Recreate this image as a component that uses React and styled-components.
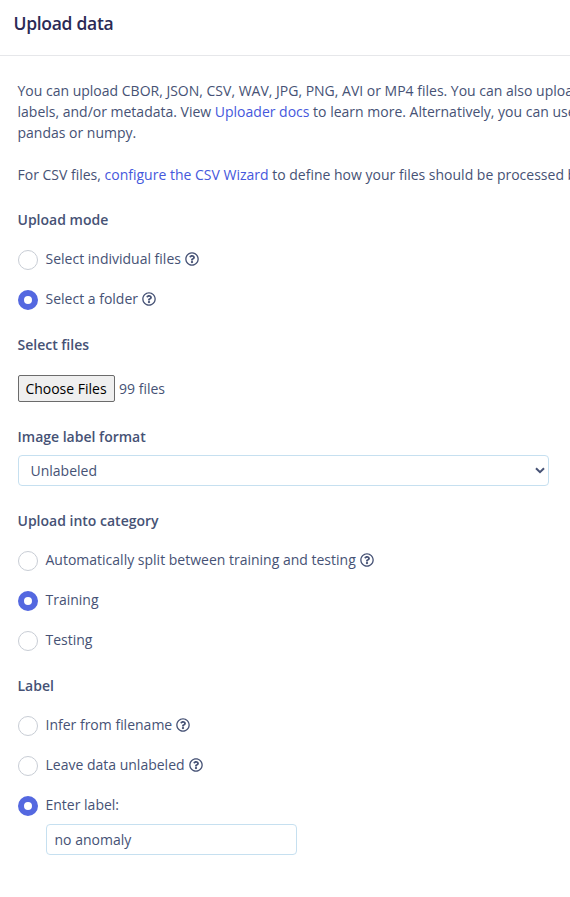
import React from "react";
import styled, { createGlobalStyle } from "styled-components";
import { FaRegQuestionCircle } from "react-icons/fa";

const GlobalStyle = createGlobalStyle`
  *, *::before, *::after { box-sizing: border-box; }
  body {
    margin: 0;
    background: #fff;
    color: #465275;
    font: 400 14px/21px "Open Sans", sans-serif;
    overflow: hidden;
  }
`;

const Dialog = styled.main`
  width: 100%;
  height: 897px;
  overflow: hidden;
`;

const Header = styled.header`
  height: 56px;
  padding: 11px 13.5px 0;
  border-bottom: 1px solid #e6e7ea;
`;

const Title = styled.h1`
  margin: 0;
  color: #2b2a55;
  font-size: 17.5px;
  font-weight: 600;
  line-height: 25px;
  letter-spacing: -0.3px;
`;

const Content = styled.div`
  padding: 24px 21px 0 17.5px;
`;

const Paragraph = styled.p`
  margin: 0 0 21px;
  white-space: nowrap;
`;

const Link = styled.a`
  color: #4558dc;
  text-decoration: none;
`;

const Section = styled.section`
  margin-top: ${({ $top }) => $top}px;
`;

const Heading = styled.h2`
  margin: 0 0 ${({ $gap }) => $gap}px;
  font-size: 14px;
  font-weight: 600;
  line-height: 21px;
`;

const RadioList = styled.div`
  display: flex;
  flex-direction: column;
  gap: 19px;
`;

const RadioRow = styled.label`
  display: flex;
  height: 21px;
  white-space: nowrap;
`;

const RadioInput = styled.input`
  appearance: none;
  flex: none;
  width: 20px;
  height: 20px;
  margin: 2px 7.5px 0 0.5px;
  border: ${({ checked }) => (checked ? "6px solid #5468e0" : "1px solid #c8cdd5")};
  border-radius: 50%;
  background: #fff;
`;

const HelpIcon = styled(FaRegQuestionCircle)`
  flex: none;
  width: 14px;
  height: 14px;
  margin: 4px 0 0 4px;
`;

const FilePicker = styled.div`
  display: flex;
  align-items: center;
  gap: 4px;
  height: 27px;
  padding-left: 0.5px;
`;

const FileButton = styled.button`
  width: 97px;
  height: 27px;
  padding: 0 1px 0 0;
  border: 1px solid #6b6b6b;
  border-radius: 2px;
  background: #efefef;
  color: #000;
  font: inherit;
`;

const SelectBox = styled.button`
  display: flex;
  align-items: center;
  justify-content: space-between;
  width: 531px;
  height: 31px;
  margin-left: 0.5px;
  padding: 0 3px 0 11.5px;
  border: 1px solid #c6e0f0;
  border-radius: 4px;
  background: #fff;
  color: inherit;
  font: inherit;
`;

const Chevron = styled.svg`
  width: 10px;
  height: 7px;
  margin-bottom: 1px;
  fill: none;
  stroke: #465275;
  stroke-width: 2;
`;

const TextInput = styled.input`
  display: block;
  width: 251px;
  height: 31px;
  margin: 9px 0 0 28.5px;
  padding: 0 7.5px;
  border: 1px solid #c6e0f0;
  border-radius: 4px;
  outline: none;
  color: inherit;
  font: inherit;
`;

function RadioOption({ name, label, checked = false, help = false }) {
  return (
    <RadioRow>
      <RadioInput type="radio" name={name} checked={checked} readOnly />
      <span>{label}</span>
      {help && <HelpIcon />}
    </RadioRow>
  );
}

export default function App() {
  return (
    <>
      <GlobalStyle />
      <Dialog>
        <Header>
          <Title>Upload data</Title>
        </Header>
        <Content>
          <Paragraph>
            You can upload CBOR, JSON, CSV, WAV, JPG, PNG, AVI or MP4 files. You can also upload
            <br />
            labels, and/or metadata. View <Link href="#docs">Uploader docs</Link> to learn more.
            Alternatively, you can use
            <br />
            pandas or numpy.
          </Paragraph>
          <Paragraph>
            For CSV files, <Link href="#wizard">configure the CSV Wizard</Link> to define how your
            files should be processed by
          </Paragraph>

          <Section $top={24}>
            <Heading $gap={18}>Upload mode</Heading>
            <RadioList>
              <RadioOption name="mode" label="Select individual files" help />
              <RadioOption name="mode" label="Select a folder" checked help />
            </RadioList>
          </Section>

          <Section $top={25}>
            <Heading $gap={20}>Select files</Heading>
            <FilePicker>
              <FileButton type="button">Choose Files</FileButton>
              <span>99 files</span>
            </FilePicker>
          </Section>

          <Section $top={24}>
            <Heading $gap={8}>Image label format</Heading>
            <SelectBox type="button">
              Unlabeled
              <Chevron viewBox="0 0 10 7">
                <path d="M1 1.2 5 5.2 9 1.2" />
              </Chevron>
            </SelectBox>
          </Section>

          <Section $top={24}>
            <Heading $gap={18}>Upload into category</Heading>
            <RadioList>
              <RadioOption
                name="category"
                label="Automatically split between training and testing"
                help
              />
              <RadioOption name="category" label="Training" checked />
              <RadioOption name="category" label="Testing" />
            </RadioList>
          </Section>

          <Section $top={25}>
            <Heading $gap={18}>Label</Heading>
            <RadioList>
              <RadioOption name="label" label="Infer from filename" help />
              <RadioOption name="label" label="Leave data unlabeled" help />
              <RadioOption name="label" label="Enter label:" checked />
            </RadioList>
            <TextInput defaultValue="no anomaly" aria-label="Label" />
          </Section>
        </Content>
      </Dialog>
    </>
  );
}
